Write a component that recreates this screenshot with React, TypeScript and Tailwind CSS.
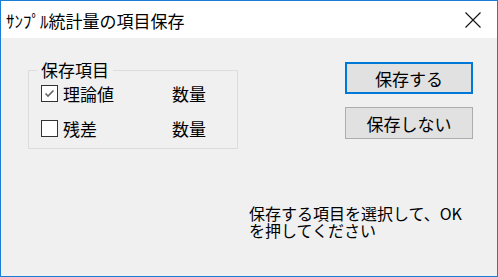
import React from "react";

const font = { fontFamily: '"Noto Sans CJK JP", "Noto Sans", sans-serif' };

function Check({ checked }: { checked: boolean }) {
  return (
    <span className="w-[17px] h-[17px] border border-[#333333] bg-white flex items-center justify-center shrink-0">
      {checked && (
        <svg width="13" height="13" viewBox="0 0 13 13">
          <path d="M2.5 6.5 L5 9 L10.5 3.5" fill="none" stroke="#666666" strokeWidth="1.6" />
        </svg>
      )}
    </span>
  );
}

export default function App() {
  return (
    <div
      className="w-[498px] h-[277px] border border-[#1a7fd4] bg-[#f0f0f0] flex flex-col text-black overflow-hidden"
      style={font}
    >
      <div className="h-[37px] bg-white flex items-center pl-[5px] shrink-0">
        <span className="text-[17px] leading-[17px] mt-[1px]">ｻﾝﾌﾟﾙ統計量の項目保存</span>
        <svg className="ml-auto mr-[16px]" width="16" height="16" viewBox="0 0 16 16">
          <path d="M0.5 0.5 L15.5 15.5 M15.5 0.5 L0.5 15.5" stroke="#111111" strokeWidth="1.1" />
        </svg>
      </div>
      <div className="flex-1 flex flex-col">
        <div className="flex pt-[24px]">
          <fieldset className="ml-[27px] w-[210px] h-[87px] border border-[#dcdcdc] pl-[8px] pt-[6px]">
            <legend className="px-[4px] text-[17px] leading-[16px]">保存項目</legend>
            <div className="flex flex-col gap-[16px] pl-[4px]">
              <div className="flex items-center h-[19px]">
                <Check checked />
                <span className="ml-[5px] w-[109px] text-[17px] leading-[19px]">理論値</span>
                <span className="text-[17px] leading-[19px]">数量</span>
              </div>
              <div className="flex items-center h-[19px]">
                <Check checked={false} />
                <span className="ml-[5px] w-[109px] text-[17px] leading-[19px]">残差</span>
                <span className="text-[17px] leading-[19px]">数量</span>
              </div>
            </div>
          </fieldset>
          <div className="ml-auto mr-[24px] flex flex-col gap-[13px]">
            <button className="w-[128px] h-[32px] border-2 border-[#0078d7] bg-[#e1e1e1] text-[17px] leading-[17px] flex items-center justify-center">
              保存する
            </button>
            <button className="w-[128px] h-[32px] border border-[#adadad] bg-[#e1e1e1] text-[17px] leading-[17px] flex items-center justify-center">
              保存しない
            </button>
          </div>
        </div>
        <div className="ml-[248px] mt-[56px] text-[16px] leading-[17px]">
          保存する項目を選択して、OK
          <br />
          を押してください
        </div>
      </div>
    </div>
  );
}
